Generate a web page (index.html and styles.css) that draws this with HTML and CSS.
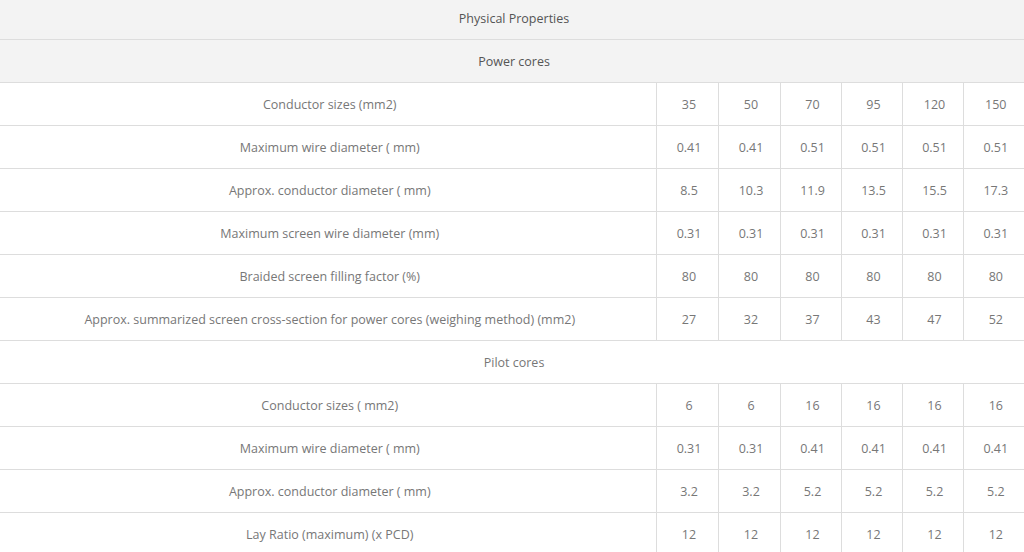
FILE: index.html
```html
<!DOCTYPE html>
<html>
<head>
<meta charset="utf-8">
<link rel="stylesheet" href="styles.css">
</head>
<body>
<table class="props">
<colgroup>
<col class="c-label"><col class="c-w62"><col class="c-w62"><col class="c-w61"><col class="c-w61"><col class="c-w61"><col class="c-w61">
</colgroup>
<tbody>
<tr class="head first"><td colspan="7">Physical Properties</td></tr>
<tr class="head"><td colspan="7">Power cores</td></tr>
<tr><td>Conductor sizes (mm2)</td><td>35</td><td>50</td><td>70</td><td>95</td><td>120</td><td>150</td></tr>
<tr><td>Maximum wire diameter ( mm)</td><td>0.41</td><td>0.41</td><td>0.51</td><td>0.51</td><td>0.51</td><td>0.51</td></tr>
<tr><td>Approx. conductor diameter ( mm)</td><td>8.5</td><td>10.3</td><td>11.9</td><td>13.5</td><td>15.5</td><td>17.3</td></tr>
<tr><td>Maximum screen wire diameter (mm)</td><td>0.31</td><td>0.31</td><td>0.31</td><td>0.31</td><td>0.31</td><td>0.31</td></tr>
<tr><td>Braided screen filling factor (%)</td><td>80</td><td>80</td><td>80</td><td>80</td><td>80</td><td>80</td></tr>
<tr><td>Approx. summarized screen cross-section for power cores (weighing method) (mm2)</td><td>27</td><td>32</td><td>37</td><td>43</td><td>47</td><td>52</td></tr>
<tr class="sub"><td colspan="7">Pilot cores</td></tr>
<tr><td>Conductor sizes ( mm2)</td><td>6</td><td>6</td><td>16</td><td>16</td><td>16</td><td>16</td></tr>
<tr><td>Maximum wire diameter ( mm)</td><td>0.31</td><td>0.31</td><td>0.41</td><td>0.41</td><td>0.41</td><td>0.41</td></tr>
<tr><td>Approx. conductor diameter ( mm)</td><td>3.2</td><td>3.2</td><td>5.2</td><td>5.2</td><td>5.2</td><td>5.2</td></tr>
<tr><td>Lay Ratio (maximum) (x PCD)</td><td>12</td><td>12</td><td>12</td><td>12</td><td>12</td><td>12</td></tr>
</tbody>
</table>
</body>
</html>
```
FILE: styles.css
```css
html, body {
  margin: 0;
  padding: 0;
  background: #fff;
}
.props {
  width: 1024px;
  border-collapse: collapse;
  table-layout: fixed;
  font-family: "Open Sans", "Liberation Sans", sans-serif;
  font-size: 12.5px;
  color: #777;
}
.c-label { width: 656px; }
.c-w62 { width: 62px; }
.c-w61 { width: 61px; }
.props td {
  height: 43px;
  padding: 2px 2px 0 6px;
  text-align: center;
  vertical-align: middle;
  border-top: 1px solid #ddd;
  border-bottom: 1px solid #ddd;
  border-left: 1px solid #ddd;
  box-sizing: border-box;
}
.props td:first-child {
  border-left: none;
}
.props tr.head td {
  background: #f3f3f3;
  color: #555;
}
.props tr.first td {
  height: 39px;
  border-top: none;
  padding-top: 1px;
  padding-bottom: 2px;
}
```
